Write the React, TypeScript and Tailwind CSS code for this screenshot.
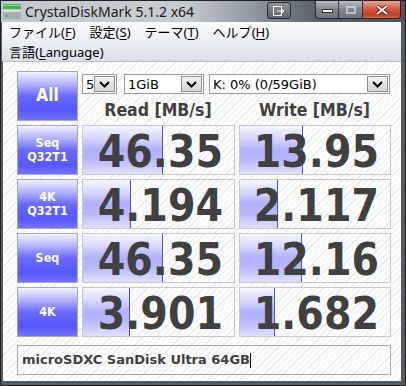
import React from 'react';

const rows = [
  { label: ['Seq', 'Q32T1'], read: '46.35', readW: 80, write: '13.95', writeW: 63 },
  { label: ['4K', 'Q32T1'], read: '4.194', readW: 48, write: '2.117', writeW: 38 },
  { label: ['Seq'], read: '46.35', readW: 80, write: '12.16', writeW: 62 },
  { label: ['4K'], read: '3.901', readW: 47, write: '1.682', writeW: 35 },
];

const hatch =
  'bg-[repeating-linear-gradient(135deg,#ececec_0px,#ececec_1px,#ffffff_1px,#ffffff_4.5px)]';

const blueBtn =
  'border border-[#a4a4dc] bg-[linear-gradient(to_bottom,#f2f2ff_0%,#b4b4ff_25%,#6a6aff_50%,#5656ff_80%,#7474ff_100%)] text-white font-bold';

const Chevron = () => (
  <svg width="11" height="7" viewBox="0 0 11 7">
    <polyline points="1,1 5.5,5.5 10,1" fill="none" stroke="#000" strokeWidth="2" />
  </svg>
);

const DropBtn = () => (
  <div className="w-[21px] h-full flex items-center justify-center border border-[#8e8f8f] bg-[linear-gradient(to_bottom,#f4f4f4,#e4e4e4_50%,#d4d4d4)]">
    <Chevron />
  </div>
);

const Combo = ({ text, className }: { text: string; className: string }) => (
  <div className={`flex h-[20px] border border-[#9c9c9c] bg-white p-px ${className}`}>
    <div className="flex-1 overflow-hidden whitespace-nowrap text-[13px] leading-[18px] pl-[2px] text-black">
      {text}
    </div>
    <DropBtn />
  </div>
);

const ValueBox = ({ value, w, width }: { value: string; w: number; width: string }) => (
  <div className={`relative ${width} h-full border border-[#c8c8c8] ${hatch} overflow-hidden`}>
    <div
      className="absolute left-0 top-0 bottom-0 border-r border-[#5252b0] bg-[linear-gradient(to_bottom,#f6f6ff_0%,#d8d8ff_25%,#b0b0ff_50%,#b8b8ff_70%,#e0e0ff_100%)]"
      style={{ width: w }}
    />
    <div className="relative h-full flex items-center justify-end pr-[11px] pt-[3px] text-[44px] leading-none font-bold text-[#404040] [font-family:'DejaVu_Sans_Condensed','DejaVu_Sans',sans-serif] [font-stretch:condensed]">
      {value}
    </div>
  </div>
);

const Menu = ({ pre, key_ }: { pre: string; key_: string }) => (
  <span className="px-[7px]">
    {pre}(<span className="underline underline-offset-2">{key_}</span>)
  </span>
);

export default function App() {
  return (
    <div className="w-[406px] h-[386px] flex flex-col bg-[#545b62] border border-[#1f2328] overflow-hidden">
      {/* title bar */}
      <div className="h-[21px] flex items-start bg-[linear-gradient(to_right,#c2c8ce_0%,#c6ccd2_45%,#9199a1_62%,#59616a_78%,#4c535b_100%)]">
        <svg width="18" height="16" viewBox="0 0 18 16" className="ml-[2px] mt-[3px]">
          <rect x="0" y="0" width="18" height="5" fill="#3cb84a" />
          <rect x="0" y="1" width="18" height="1" fill="#8ee08e" />
          <rect x="0" y="6" width="18" height="9" fill="#a9adb0" />
          <rect x="0" y="6" width="18" height="2" fill="#d8dadc" />
          <rect x="2" y="11" width="3" height="2" fill="#3fd04a" />
        </svg>
        <div className="ml-[4px] mt-[1px] text-[14px] leading-[20px] text-[#1a1a1a] [font-family:'Noto_Sans','DejaVu_Sans',sans-serif]">
          CrystalDiskMark 5.1.2 x64
        </div>
        <div className="ml-auto mr-[4px] flex items-start">
          <div className="mt-px w-[24px] h-[17px] rounded-[3px] border border-[#2a2f35] bg-[linear-gradient(to_bottom,#8c939a,#5d646b)] flex items-center justify-center">
            <svg width="12" height="10" viewBox="0 0 12 10">
              <rect x="0.5" y="0.5" width="8" height="9" fill="none" stroke="#fff" />
              <path d="M4 5 H11 M8.5 2.5 L11 5 L8.5 7.5" fill="none" stroke="#fff" />
            </svg>
          </div>
          <div className="ml-[24px] w-[48px] h-[18px] flex rounded-bl-[4px] border border-t-0 border-[#2a2f35] overflow-hidden bg-[linear-gradient(to_bottom,#b6bcc2,#7e858c_50%,#6c737a)]">
            <div className="w-[24px] flex items-center justify-center border-r border-[#3a4047]">
              <div className="w-[11px] h-[4px] mt-[3px] bg-white border border-[#333]" />
            </div>
            <div className="w-[24px] flex items-center justify-center">
              <div className="w-[10px] h-[8px] border-2 border-[#d9dde1] opacity-70" />
            </div>
          </div>
          <div className="w-[38px] h-[18px] rounded-br-[4px] border border-t-0 border-l-0 border-[#4b1a12] bg-[linear-gradient(to_bottom,#e8a593,#d0563f_50%,#c03c24_80%,#d26a50)] flex items-center justify-center">
            <svg width="12" height="10" viewBox="0 0 12 10">
              <path d="M1 1 L11 9 M11 1 L1 9" stroke="#3a1a14" strokeWidth="3.5" />
              <path d="M1 1 L11 9 M11 1 L1 9" stroke="#fff" strokeWidth="2" />
            </svg>
          </div>
        </div>
      </div>

      <div className="flex-1 flex flex-col pl-[2px] pr-[4px] pb-[4px]">
        {/* menu */}
        <div className="h-[40px] border-b border-[#b9bfca] bg-[linear-gradient(to_bottom,#fbfcfd,#eef1f6_40%,#d9deea)] text-[13px] leading-[20px] text-black [font-family:'Noto_Sans','Noto_Sans_CJK_JP',sans-serif] -ml-[1px]">
          <div className="flex">
            <Menu pre="ファイル" key_="F" />
            <Menu pre="設定" key_="S" />
            <Menu pre="テーマ" key_="T" />
            <Menu pre="ヘルプ" key_="H" />
          </div>
          <div className="flex">
            <span className="px-[7px]">
              言語(<span className="underline underline-offset-2">L</span>anguage)
            </span>
          </div>
        </div>

        {/* client */}
        <div className={`flex-1 ${hatch} pl-[14px] pt-[9px]`}>
          <div className="flex h-[50px]">
            <div className={`w-[61px] h-[50px] ${blueBtn} flex items-center justify-center text-[17px] [font-family:'DejaVu_Sans_Condensed','DejaVu_Sans',sans-serif] [font-stretch:condensed] [text-shadow:0_0_1px_#8080c0]`}>
              All
            </div>
            <div className="ml-[4px] w-[308px] flex flex-col [font-family:'DejaVu_Sans','Liberation_Sans',sans-serif]">
              <div className="flex mt-[3px]">
                <Combo text="5" className="w-[35px]" />
                <Combo text="1GiB" className="w-[80px] ml-[7px]" />
                <Combo text="K: 0% (0/59GiB)" className="w-[181px] ml-[5px]" />
              </div>
              <div className="flex mt-[6px] h-[21px] items-center text-[17.5px] font-bold text-[#404040] [font-family:'DejaVu_Sans_Condensed','DejaVu_Sans',sans-serif] [font-stretch:condensed]">
                <div className="w-[152px] text-center">Read [MB/s]</div>
                <div className="w-[151px] ml-[5px] text-center">Write [MB/s]</div>
              </div>
            </div>
          </div>

          <div className="flex flex-col gap-[4px] mt-[4px]">
            {rows.map((r, i) => (
              <div key={i} className="flex h-[50px]">
                <div className={`w-[61px] h-full ${blueBtn} flex flex-col items-center justify-center text-[12.5px] leading-[14px] [font-family:'DejaVu_Sans_Condensed','DejaVu_Sans',sans-serif] [font-stretch:condensed] text-[#f4f4ff]`}>
                  {r.label.map((l) => (
                    <div key={l}>{l}</div>
                  ))}
                </div>
                <div className="ml-[4px]">
                  <ValueBox value={r.read} w={r.readW} width="w-[153px]" />
                </div>
                <div className="ml-[4px]">
                  <ValueBox value={r.write} w={r.writeW} width="w-[152px]" />
                </div>
              </div>
            ))}
          </div>

          <div className={`mt-[8px] w-[374px] h-[30px] border border-[#a8a8a8] ${hatch} flex items-center pl-[4px]`}>
            <span className="text-[13px] font-bold text-[#404040] [font-family:'DejaVu_Sans','Liberation_Sans',sans-serif]">
              microSDXC SanDisk Ultra 64GB
            </span>
            <span className="w-px h-[15px] bg-black" />
          </div>
        </div>
      </div>
    </div>
  );
}
